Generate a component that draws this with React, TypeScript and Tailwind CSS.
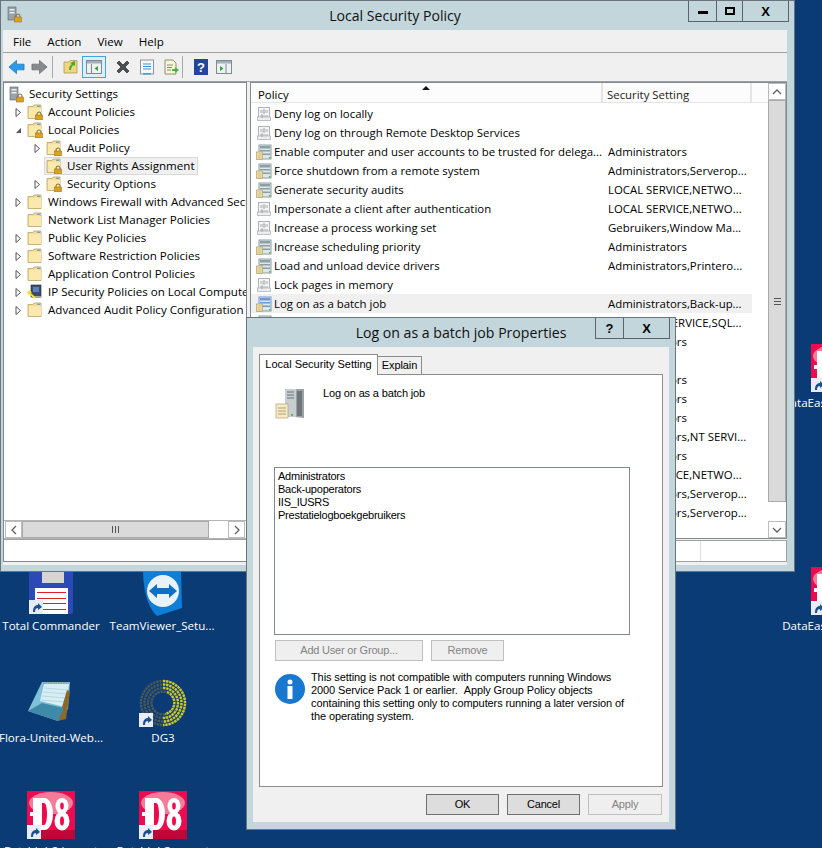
const ui = "font-['Open_Sans','Noto_Sans',sans-serif]";

function Shortcut({ className = "" }: { className?: string }) {
  return (
    <svg viewBox="0 0 14 14" className={"absolute h-[14px] w-[14px] " + className}>
      <rect width="14" height="14" fill="#e8ecf4" />
      <path d="M4 12 C4 7 6 5 9 5 L9 3 L13 7 L9 10 L9 8 C7 8 6 9 6 12 Z" fill="#1c4f93" />
    </svg>
  );
}

function FolderPlain() {
  return (
    <svg viewBox="0 0 16 16" className="h-[16px] w-[16px] shrink-0">
      <path d="M1 2.5 H6 L7 1 H14 V14.5 H1 Z" fill="#f7dc92" stroke="#b9a268" strokeWidth="0.8" />
      <rect x="2" y="4" width="12" height="10" fill="#fbe8ac" />
      <rect x="10" y="1.6" width="3" height="1.4" fill="#6aa7d8" />
    </svg>
  );
}

function Lock({ x = 8, y = 8 }: { x?: number; y?: number }) {
  return (
    <g transform={`translate(${x} ${y})`}>
      <path d="M2 3 V2 A2 2 0 0 1 6 2 V3" fill="none" stroke="#7d6a2e" strokeWidth="1" />
      <rect x="0.5" y="3" width="7" height="5" fill="#dba11f" stroke="#8f6a12" strokeWidth="0.5" />
    </g>
  );
}

function FolderLock() {
  return (
    <svg viewBox="0 0 16 16" className="h-[16px] w-[16px] shrink-0">
      <path d="M1 2.5 H6 L7 1 H14 V14.5 H1 Z" fill="#f7dc92" stroke="#b9a268" strokeWidth="0.8" />
      <rect x="2" y="4" width="12" height="10" fill="#fbe8ac" />
      <rect x="10" y="1.6" width="3" height="1.4" fill="#6aa7d8" />
      <Lock x={8} y={8} />
    </svg>
  );
}

function ServerLock() {
  return (
    <svg viewBox="0 0 16 17" className="h-[17px] w-[16px] shrink-0">
      <rect x="1" y="1" width="8" height="13" fill="#9aa3a8" stroke="#59636a" strokeWidth="0.6" />
      <rect x="2.5" y="3" width="5" height="1.5" fill="#e8ecee" />
      <rect x="2.5" y="6" width="5" height="1.5" fill="#e8ecee" />
      <Lock x={7} y={8} />
    </svg>
  );
}

function IpSecurity() {
  return (
    <svg viewBox="0 0 16 16" className="h-[16px] w-[16px] shrink-0">
      <rect x="4" y="1" width="10" height="12" fill="#3f4d63" stroke="#1d2433" strokeWidth="0.6" />
      <rect x="6" y="3" width="6" height="5" fill="#5a80c4" />
      <rect x="5" y="12" width="9" height="2" fill="#a0a6ad" />
      <path d="M1 8 L8 14" stroke="#efe12d" strokeWidth="2.2" />
      <circle cx="2.5" cy="8.5" r="2" fill="#efe12d" />
    </svg>
  );
}

function PolicyPaper() {
  return (
    <svg viewBox="0 0 16 16" className="h-[16px] w-[16px] shrink-0">
      <rect x="2.5" y="1.5" width="11" height="12" fill="#f4f4f4" stroke="#aeb4b8" />
      <rect x="1.5" y="11" width="13" height="3.5" fill="#eeeeee" stroke="#aeb4b8" strokeWidth="0.8" />
      <path d="M5 4 V7 M7 4 H9 V7 H7 Z M11 4 V7 M5 9 H7 V11 H5 Z M9 9 V11 M11 9 V11" stroke="#9aa1a6" strokeWidth="0.8" fill="none" />
    </svg>
  );
}

function PolicyServer({ blue = false }: { blue?: boolean }) {
  const body = blue ? "#6f9cc9" : "#8c9fa6";
  return (
    <svg viewBox="0 0 16 16" className="h-[16px] w-[16px] shrink-0">
      <rect x="3" y="1" width="12" height="14" fill="#dfe6e8" stroke={body} />
      <rect x="4" y="2" width="10" height="2.5" fill={body} />
      <rect x="4" y="6" width="10" height="1.5" fill={body} />
      <rect x="4" y="9.5" width="10" height="1.5" fill={body} />
      <rect x="0.5" y="8" width="6" height="7.5" fill="#f2e6b4" stroke="#b39e61" strokeWidth="0.7" />
      <path d="M1.5 10 H5.5 M1.5 12 H5.5 M1.5 14 H5.5" stroke="#b39e61" strokeWidth="0.6" />
      <rect x="13" y="13" width="1.5" height="1.5" fill="#4fc03a" />
    </svg>
  );
}

function Expand({ kind }: { kind: "closed" | "open" | "none" }) {
  if (kind === "none") return <span className="h-[9px] w-[9px] shrink-0" />;
  if (kind === "open") {
    return (
      <svg viewBox="0 0 9 9" className="h-[9px] w-[9px] shrink-0">
        <path d="M2 7 H7 V2 Z" fill="#555" />
      </svg>
    );
  }
  return (
    <svg viewBox="0 0 9 9" className="h-[9px] w-[9px] shrink-0">
      <path d="M2 0.5 L6.5 4.5 L2 8.5 Z" fill="#fff" stroke="#555" />
    </svg>
  );
}

type TreeItem = {
  label: string;
  depth: 0 | 1;
  expand: "closed" | "open" | "none";
  icon: "lock" | "plain" | "ip";
  selected?: boolean;
};

const tree: TreeItem[] = [
  { label: "Account Policies", depth: 0, expand: "closed", icon: "lock" },
  { label: "Local Policies", depth: 0, expand: "open", icon: "lock" },
  { label: "Audit Policy", depth: 1, expand: "closed", icon: "lock" },
  { label: "User Rights Assignment", depth: 1, expand: "none", icon: "lock", selected: true },
  { label: "Security Options", depth: 1, expand: "closed", icon: "lock" },
  { label: "Windows Firewall with Advanced Security", depth: 0, expand: "closed", icon: "plain" },
  { label: "Network List Manager Policies", depth: 0, expand: "none", icon: "plain" },
  { label: "Public Key Policies", depth: 0, expand: "closed", icon: "plain" },
  { label: "Software Restriction Policies", depth: 0, expand: "closed", icon: "plain" },
  { label: "Application Control Policies", depth: 0, expand: "closed", icon: "plain" },
  { label: "IP Security Policies on Local Computer", depth: 0, expand: "closed", icon: "ip" },
  { label: "Advanced Audit Policy Configuration", depth: 0, expand: "closed", icon: "plain" },
];

const rows: { name: string; setting: string; icon: "paper" | "server"; selected?: boolean }[] = [
  { name: "Deny log on locally", setting: "", icon: "paper" },
  { name: "Deny log on through Remote Desktop Services", setting: "", icon: "paper" },
  { name: "Enable computer and user accounts to be trusted for delega...", setting: "Administrators", icon: "server" },
  { name: "Force shutdown from a remote system", setting: "Administrators,Serverop...", icon: "server" },
  { name: "Generate security audits", setting: "LOCAL SERVICE,NETWO...", icon: "server" },
  { name: "Impersonate a client after authentication", setting: "LOCAL SERVICE,NETWO...", icon: "paper" },
  { name: "Increase a process working set", setting: "Gebruikers,Window Ma...", icon: "paper" },
  { name: "Increase scheduling priority", setting: "Administrators", icon: "server" },
  { name: "Load and unload device drivers", setting: "Administrators,Printero...", icon: "server" },
  { name: "Lock pages in memory", setting: "", icon: "paper" },
  { name: "Log on as a batch job", setting: "Administrators,Back-up...", icon: "server", selected: true },
  { name: "Log on as a service", setting: "NETWORK SERVICE,SQL...", icon: "server" },
  { name: "Manage auditing and security log", setting: "Administrators", icon: "server" },
  { name: "Modify an object label", setting: "", icon: "paper" },
  { name: "Modify firmware environment values", setting: "Administrators", icon: "server" },
  { name: "Obtain an impersonation token", setting: "Administrators", icon: "server" },
  { name: "Perform volume maintenance tasks", setting: "Administrators", icon: "server" },
  { name: "Profile single process", setting: "Administrators,NT SERVI...", icon: "server" },
  { name: "Profile system performance", setting: "Administrators", icon: "server" },
  { name: "Replace a process level token", setting: "LOCAL SERVICE,NETWO...", icon: "server" },
  { name: "Restore files and directories", setting: "Administrators,Serverop...", icon: "server" },
  { name: "Shut down the system", setting: "Administrators,Serverop...", icon: "server" },
];

function D8Icon({ className = "" }: { className?: string }) {
  return (
    <div className={"absolute h-[48px] w-[48px] " + className}>
      <svg viewBox="0 0 48 48" className="h-full w-full">
        <rect width="48" height="48" fill="#ee0a4e" />
        <rect y="39" width="48" height="9" fill="#c00636" />
        <ellipse cx="24" cy="12" rx="22" ry="11" fill="#f47c99" />
        <path d="M6 7 H17 C29 7 29 39 17 39 H6 V25 H3 V21 H6 Z" fill="#fff" />
        <path d="M15 12 H17 C21 12 21 34 17 34 H15 Z" fill="#ee0a4e" />
        <ellipse cx="35" cy="15" rx="6.5" ry="8" fill="#fff" />
        <ellipse cx="35" cy="30" rx="7.5" ry="9.5" fill="#fff" />
        <ellipse cx="35" cy="15" rx="1.8" ry="3.5" fill="#ee0a4e" />
        <ellipse cx="35" cy="30" rx="2" ry="4.5" fill="#ee0a4e" />
      </svg>
      <Shortcut className="bottom-0 left-0" />
    </div>
  );
}

function DesktopLabel({ text, center, y }: { text: string; center: number; y: number }) {
  return (
    <div
      className="absolute -translate-x-1/2 whitespace-nowrap text-[11.6px] leading-[16px] text-white"
      style={{ left: center, top: y }}
    >
      {text}
    </div>
  );
}

function Desktop() {
  return (
    <>
      <div className="absolute left-[29px] top-[560px] h-[54px] w-[44px] rounded-[2px] bg-[#2c49b8]">
        <div className="absolute left-[13px] top-[12px] h-[11px] w-[22px] bg-[#d5d5d8]" />
        <div className="absolute bottom-0 right-[5px] flex h-[26px] w-[33px] flex-col justify-around bg-white px-[2px] py-[2px]">
          <div className="h-[1px] bg-[#d8232a]" />
          <div className="h-[1px] bg-[#d8232a]" />
          <div className="h-[1px] bg-[#d8232a]" />
          <div className="h-[1px] bg-[#d8232a]" />
        </div>
        <Shortcut className="bottom-0 left-0" />
      </div>
      <svg viewBox="0 0 40 44" className="absolute left-[143px] top-[572px] h-[44px] w-[40px]">
        <path d="M0 0 H38 L39 36 L14 44 Q1 32 0 0 Z" fill="#0e7fd8" />
        <circle cx="20" cy="19" r="16" fill="#e8f2fa" />
        <path d="M6 19 L14 12 V16 H26 V12 L34 19 L26 26 V22 H14 V26 Z" fill="#0e6fc4" />
      </svg>
      <svg viewBox="0 0 44 42" className="absolute left-[28px] top-[681px] h-[42px] w-[44px]">
        <path d="M14 1 H42 L40 28 L30 40 L0 30 Z" fill="#7fc1d8" />
        <path d="M16 3 L41 3 L37 26 L12 20 Z" fill="#d8eef4" />
        <path d="M16 7 L40 9 M15 11 L39 13 M14 15 L38 17 M13 19 L37 21" stroke="#b8d8e2" />
        <path d="M30 40 L39 9 L42 11 L38 38 Z" fill="#8a6a2a" />
        <path d="M14 22 L36 27 L30 40 L0 30 Z" fill="#3e8aa8" />
        <path d="M15 2 H41" stroke="#9aa0a4" strokeWidth="2" strokeDasharray="1.5 1" />
      </svg>
      <div className="absolute left-[139px] top-[679px] h-[48px] w-[48px]">
        <svg viewBox="0 0 48 48" className="h-full w-full">
          <g fill="none" strokeDasharray="2.4 0.8" strokeWidth="2.4">
            <circle cx="24" cy="24" r="22" stroke="#4a5a5a" />
            <circle cx="24" cy="24" r="18.5" stroke="#4a5a5a" />
            <circle cx="24" cy="24" r="15" stroke="#4a5a5a" />
            <circle cx="24" cy="24" r="11.5" stroke="#4a5a5a" />
            <path d="M24 2 A22 22 0 0 1 24 46" stroke="#c8c92a" />
            <path d="M24 5.5 A18.5 18.5 0 0 1 24 42.5" stroke="#c8c92a" />
            <path d="M24 9 A15 15 0 0 1 24 39" stroke="#c8c92a" />
            <path d="M28 13 A11.5 11.5 0 0 1 26 35" stroke="#c8c92a" />
          </g>
        </svg>
        <Shortcut className="bottom-0 left-0" />
      </div>
      <D8Icon className="left-[27px] top-[791px]" />
      <D8Icon className="left-[139px] top-[791px]" />
      <D8Icon className="left-[811px] top-[344px]" />
      <D8Icon className="left-[811px] top-[567px]" />
      <DesktopLabel text="Total Commander" center={51} y={618} />
      <DesktopLabel text="TeamViewer_Setu..." center={162} y={618} />
      <DesktopLabel text="Flora-United-Web..." center={51} y={730} />
      <DesktopLabel text="DG3" center={163} y={730} />
      <DesktopLabel text="Batchjob2 import" center={51} y={843} />
      <DesktopLabel text="Batchjob3 export" center={163} y={843} />
      <DesktopLabel text="DataEasy" center={807} y={395} />
      <DesktopLabel text="DataEasy" center={807} y={618} />
    </>
  );
}

function Toolbar() {
  return (
    <div className="flex h-[29px] shrink-0 items-center border-b border-[#a0a0a0] bg-[#f0f0f0] pl-[4px]">
      <svg viewBox="0 0 18 16" className="ml-[1px] h-[16px] w-[17px]">
        <path d="M1 8 L9 1 V5 H17 V11 H9 V15 Z" fill="#2a9bea" stroke="#1568a8" strokeWidth="0.7" />
      </svg>
      <svg viewBox="0 0 18 16" className="ml-[6px] h-[16px] w-[17px]">
        <path d="M17 8 L9 1 V5 H1 V11 H9 V15 Z" fill="#858b8e" stroke="#5c6366" strokeWidth="0.7" />
      </svg>
      <div className="ml-[4px] h-[22px] w-[1px] bg-[#a8a8a8]" />
      <svg viewBox="0 0 16 16" className="ml-[10px] h-[16px] w-[16px]">
        <path d="M1 3 H6 L7 1.5 H14 V14 H1 Z" fill="#f2d57e" stroke="#a98f4a" strokeWidth="0.7" />
        <path d="M6 11 C6 8 7 6 9 5 L7 4 L12 2 L12 7 L10.5 6 C9 7 8 9 8 11 Z" fill="#3fae2a" />
      </svg>
      <div className="ml-[3px] flex h-[22px] w-[24px] items-center justify-center border border-[#40a6e0] bg-[#dbeefb]">
        <svg viewBox="0 0 16 14" className="h-[14px] w-[16px]">
          <rect x="0.5" y="0.5" width="15" height="13" fill="#eef1f2" stroke="#7f8a90" />
          <rect x="1" y="1" width="14" height="2.5" fill="#9fb0ba" />
          <path d="M5.5 4 V13" stroke="#7f8a90" />
          <path d="M12 6 L8.5 8.5 L12 11 Z" fill="#2ca53a" />
        </svg>
      </div>
      <svg viewBox="0 0 16 16" className="ml-[9px] h-[16px] w-[16px]">
        <path d="M2 4 L4 2 L8 6 L12 2 L14 4 L10 8 L14 12 L12 14 L8 10 L4 14 L2 12 L6 8 Z" fill="#4b4f52" stroke="#383b3d" strokeWidth="0.8" />
      </svg>
      <svg viewBox="0 0 16 16" className="ml-[8px] h-[16px] w-[16px]">
        <rect x="1.5" y="1" width="13" height="14" fill="#f8f8f8" stroke="#8b9498" />
        <path d="M4 5 H12 M4 7.5 H12 M4 10 H12" stroke="#3f8fd4" />
        <rect x="4" y="14" width="8" height="1.5" fill="#39a0e0" />
      </svg>
      <svg viewBox="0 0 16 16" className="ml-[8px] h-[16px] w-[16px]">
        <path d="M2 1 H10 L13 4 V15 H2 Z" fill="#fbf5d8" stroke="#8b8f7c" />
        <path d="M4 6 H10 M4 8.5 H9 M4 11 H8" stroke="#8a8a72" />
        <path d="M9 10 H12 V8 L16 11 L12 14 V12 H9 Z" fill="#43b83a" />
      </svg>
      <div className="ml-[3px] h-[22px] w-[1px] bg-[#a8a8a8]" />
      <svg viewBox="0 0 14 16" className="ml-[11px] h-[16px] w-[14px]">
        <rect width="14" height="16" fill="#23469a" />
        <text x="7" y="13" fontSize="13" fontWeight="bold" textAnchor="middle" fill="#fff" fontFamily="Liberation Sans">?</text>
      </svg>
      <svg viewBox="0 0 16 14" className="ml-[8px] h-[14px] w-[16px]">
        <rect x="0.5" y="0.5" width="15" height="13" fill="#eef1f2" stroke="#7f8a90" />
        <rect x="1" y="1" width="14" height="2.5" fill="#9fb0ba" />
        <path d="M10 4 V13" stroke="#7f8a90" />
        <path d="M4 6 L7.5 8.5 L4 11 Z" fill="#2ca53a" />
      </svg>
    </div>
  );
}

function ScrollArrow({ d, className = "" }: { d: string; className?: string }) {
  return (
    <div className={"flex shrink-0 items-center justify-center border border-[#bcbcbc] bg-white " + className}>
      <svg viewBox="0 0 10 10" className="h-[10px] w-[10px]">
        <path d={d} fill="none" stroke="#606060" strokeWidth="1.3" />
      </svg>
    </div>
  );
}

function TreePane() {
  return (
    <div className="flex h-[480px] w-[244px] shrink-0 flex-col overflow-hidden border border-[#828790] bg-white">
      <div className="min-h-0 flex-1 overflow-hidden pl-[5px] pt-[2px] text-[11.6px] leading-[18px] text-black">
        <div className="flex h-[18px] items-center whitespace-nowrap">
          <ServerLock />
          <span className="ml-[4px]">Security Settings</span>
        </div>
        {tree.map((t) => (
          <div
            key={t.label}
            className={"flex h-[18px] items-center whitespace-nowrap " + (t.depth === 1 ? "pl-[24px]" : "pl-[5px]")}
          >
            <Expand kind={t.expand} />
            <div
              className={
                "flex items-center " +
                (t.selected
                  ? "ml-[2px] h-[18px] border border-[#d9d9d9] bg-[#f0f0f0] pl-[1px] pr-[2px]"
                  : "ml-[4px]")
              }
            >
              {t.icon === "lock" && <FolderLock />}
              {t.icon === "plain" && <FolderPlain />}
              {t.icon === "ip" && <IpSecurity />}
              <span className="ml-[5px]">{t.label}</span>
            </div>
          </div>
        ))}
      </div>
      <div className="flex h-[19px] shrink-0 border-y border-[#b5b5b5] bg-white px-[1px]">
        <ScrollArrow d="M7 1 L3 5 L7 9" className="h-full w-[17px]" />
        <div className="flex w-[187px] items-center justify-center gap-[1px] border border-[#a9a9a9] bg-[#dadada]">
          <div className="h-[7px] w-[1px] bg-[#555]" />
          <div className="ml-[1px] h-[7px] w-[1px] bg-[#555]" />
          <div className="ml-[1px] h-[7px] w-[1px] bg-[#555]" />
        </div>
        <div className="flex-1" />
        <ScrollArrow d="M3 1 L7 5 L3 9" className="h-full w-[17px]" />
      </div>
      <div className="h-[22px] shrink-0 border-t border-[#a0a0a0] bg-white" />
    </div>
  );
}

function ListPane() {
  return (
    <div className="ml-[3px] flex h-[480px] min-w-0 flex-1 flex-col">
      <div className="flex min-h-0 flex-1 overflow-hidden border border-[#828790] bg-white">
        <div className="min-w-0 flex-1 overflow-hidden">
          <div className="relative flex h-[20px] border-b border-[#e5e5e5] bg-[#fcfcfc] text-[11.4px] leading-[19px] text-black">
            <div className="w-[352px] border-r-2 border-[#e5e5e5] pl-[7px] pt-[2px]">Policy</div>
            <div className="w-[149px] border-r-2 border-[#e5e5e5] pl-[4px] pt-[2px] text-[#1b1b1b]">Security Setting</div>
            <svg viewBox="0 0 8 4" className="absolute left-[171px] top-[3px] h-[4px] w-[8px]">
              <path d="M0 4 L4 0 L8 4 Z" fill="#111" />
            </svg>
          </div>
          <div className="pt-[1px] text-[11.4px] leading-[19px] text-black">
            {rows.map((r) => (
              <div key={r.name} className={"flex h-[19px] w-[501px] items-center " + (r.selected ? "bg-[#f0f0f0]" : "")}>
                <div className="flex w-[353px] shrink-0 items-center gap-[2px] whitespace-nowrap pl-[5px]">
                  {r.icon === "paper" ? <PolicyPaper /> : <PolicyServer blue={r.selected} />}
                  <span>{r.name}</span>
                </div>
                <div className="whitespace-nowrap pl-[4px]">{r.setting}</div>
              </div>
            ))}
          </div>
        </div>
        <div className="flex w-[18px] shrink-0 flex-col">
          <ScrollArrow d="M1 7 L5 3 L9 7" className="h-[17px] w-full" />
          <div className="flex h-[402px] shrink-0 items-center justify-center border border-[#a9a9a9] bg-[#dadada]">
            <div className="flex flex-col gap-[1px]">
              <div className="h-[1px] w-[7px] bg-[#555]" />
              <div className="mt-[1px] h-[1px] w-[7px] bg-[#555]" />
              <div className="mt-[1px] h-[1px] w-[7px] bg-[#555]" />
            </div>
          </div>
          <div className="flex-1" />
          <ScrollArrow d="M1 3 L5 7 L9 3" className="h-[17px] w-full" />
        </div>
      </div>
      <div className="mt-[1px] flex h-[22px] shrink-0 justify-end border border-[#a0a0a0] bg-white pr-[85px]">
        <div className="w-[1px] bg-[#e0e0e0]" />
      </div>
    </div>
  );
}

function CaptionButton({ label, className = "" }: { label: React.ReactNode; className?: string }) {
  return (
    <div className={"flex items-center justify-center border-b border-l border-[#5b636b] text-[#000] " + className}>
      {label}
    </div>
  );
}

function MainWindow() {
  return (
    <div className={"absolute left-0 top-0 flex h-[572px] w-[795px] flex-col border border-[#6a747c] bg-[#c3d6dc] " + ui}>
      <div className="relative flex h-[29px] shrink-0 items-center justify-center pr-[5px]">
        <div className="absolute left-[6px] top-[5px] h-[18px] w-[16px]">
          <ServerLock />
        </div>
        <span className="text-[14.1px] text-[#111]">Local Security Policy</span>
        <div className="absolute right-[5px] top-0 flex h-[21px] border-r border-[#5b636b]">
          <CaptionButton
            className="w-[28px]"
            label={<div className="mt-[3px] h-[3px] w-[10px] bg-black" />}
          />
          <CaptionButton
            className="w-[26px]"
            label={<div className="h-[8px] w-[10px] border-2 border-black" />}
          />
          <CaptionButton
            className="w-[46px]"
            label={<span className="font-['Liberation_Sans',sans-serif] text-[13px] font-bold leading-none">X</span>}
          />
        </div>
      </div>
      <div className="mb-[6px] ml-[2px] flex min-h-0 w-[784px] flex-1 flex-col bg-[#f0f0f0]">
        <div className="flex h-[23px] shrink-0 items-center gap-[16px] border-b border-[#a0a0a0] pl-[10px] pt-[1px] text-[11.6px] text-black">
          <span>File</span>
          <span>Action</span>
          <span>View</span>
          <span>Help</span>
        </div>
        <Toolbar />
        <div className="flex min-h-0 flex-1">
          <TreePane />
          <ListPane />
        </div>
      </div>
    </div>
  );
}

function DialogButton({ label, enabled = false, className = "" }: { label: string; enabled?: boolean; className?: string }) {
  return (
    <div
      className={
        "flex h-[21px] items-center justify-center border text-[11px] tracking-[-0.2px] " +
        (enabled ? "border-[#707070] bg-[#dddddd] text-black " : "border-[#c0c0c0] bg-[#efefef] text-[#838383] ") +
        className
      }
    >
      {label}
    </div>
  );
}

function Dialog() {
  const ms = "font-['Liberation_Sans',sans-serif]";
  return (
    <div className={"absolute left-[246px] top-[317px] flex h-[513px] w-[430px] flex-col border border-[#6a747c] bg-[#c3d6dc] " + ui}>
      <div className="relative flex h-[29px] shrink-0 items-center justify-center">
        <span className="text-[14.1px] text-[#111]">Log on as a batch job Properties</span>
        <div className="absolute right-[5px] top-0 flex h-[21px] border-r border-[#5b636b]">
          <CaptionButton
            className="w-[28px]"
            label={<span className={ms + " text-[13px] font-bold leading-none"}>?</span>}
          />
          <CaptionButton
            className="w-[46px]"
            label={<span className={ms + " text-[13px] font-bold leading-none"}>X</span>}
          />
        </div>
      </div>
      <div className={"mx-[6px] mb-[7px] flex min-h-0 flex-1 flex-col bg-[#f0f0f0] px-[6px] pt-[7px] " + ms}>
        <div className="flex h-[20px] shrink-0 items-end">
          <div className="relative z-10 -mb-[1px] flex h-[21px] w-[119px] items-start justify-center whitespace-nowrap border border-b-0 border-[#8c8c8c] bg-white pt-[2px] text-[11px] leading-[15px] text-black">
            Local Security Setting
          </div>
          <div className="flex h-[18px] w-[44px] items-center justify-center border border-b-0 border-l-0 border-[#8c8c8c] bg-[#f0f0f0] text-[11px] tracking-[-0.1px] text-black">
            Explain
          </div>
        </div>
        <div className="flex h-[413px] shrink-0 flex-col border border-[#8c8c8c] bg-white px-[14px] text-[11px] leading-[13px] text-black">
          <div className="flex h-[92px] shrink-0 items-start pl-[1px] pt-[13px]">
            <svg viewBox="0 0 30 32" className="h-[32px] w-[30px]">
              <path d="M10 1 H29 V30 L10 28 Z" fill="#9ba3a6" />
              <path d="M10 1 H21 V29 H10 Z" fill="#c7cdd0" />
              <path d="M12 4 H19 M12 7 H19 M12 10 H19" stroke="#6b7275" />
              <rect x="22" y="3" width="5" height="25" fill="#6e767a" />
              <rect x="1" y="16" width="12" height="14" fill="#f5eac8" stroke="#b4a26d" strokeWidth="0.7" />
              <path d="M3 20 H11 M3 23 H11 M3 26 H11" stroke="#b4a26d" />
              <rect x="16" y="26" width="2" height="2" fill="#57c23f" />
            </svg>
            <span className="ml-[18px] mt-[-1px] tracking-[-0.15px]">Log on as a batch job</span>
          </div>
          <div className="h-[168px] w-[356px] shrink-0 border border-[#828790] px-[3px] pt-[2px] tracking-[-0.23px]">
            <div>Administrators</div>
            <div>Back-upoperators</div>
            <div>IIS_IUSRS</div>
            <div>Prestatielogboekgebruikers</div>
          </div>
          <div className="mt-[5px] flex shrink-0 pl-[1px]">
            <DialogButton label="Add User or Group..." className="w-[148px]" />
            <DialogButton label="Remove" className="ml-[8px] w-[73px]" />
          </div>
          <div className="mt-[9px] flex shrink-0 pl-[1px]">
            <svg viewBox="0 0 30 30" className="mt-[4px] h-[30px] w-[30px] shrink-0">
              <circle cx="15" cy="15" r="15" fill="#1878cf" />
              <circle cx="15" cy="8" r="2.5" fill="#fff" />
              <rect x="12.5" y="12" width="5" height="13" fill="#fff" />
            </svg>
            <p className="ml-[6px] mt-[1px] w-[315px] tracking-[-0.1px]">
              This setting is not compatible with computers running Windows 2000 Service Pack 1 or earlier.{" "}
              {"\u00A0"}Apply Group Policy objects containing this setting only to computers running a later version of the operating system.
            </p>
          </div>
        </div>
        <div className="mt-[7px] flex justify-end pr-[1px]">
          <DialogButton label="OK" enabled className="w-[73px]" />
          <DialogButton label="Cancel" enabled className="ml-[8px] w-[73px]" />
          <DialogButton label="Apply" className="ml-[8px] w-[74px]" />
        </div>
      </div>
    </div>
  );
}

export default function App() {
  return (
    <div className={"relative h-[848px] w-[822px] overflow-hidden bg-[#0a3b74] " + ui}>
      <Desktop />
      <MainWindow />
      <Dialog />
    </div>
  );
}
